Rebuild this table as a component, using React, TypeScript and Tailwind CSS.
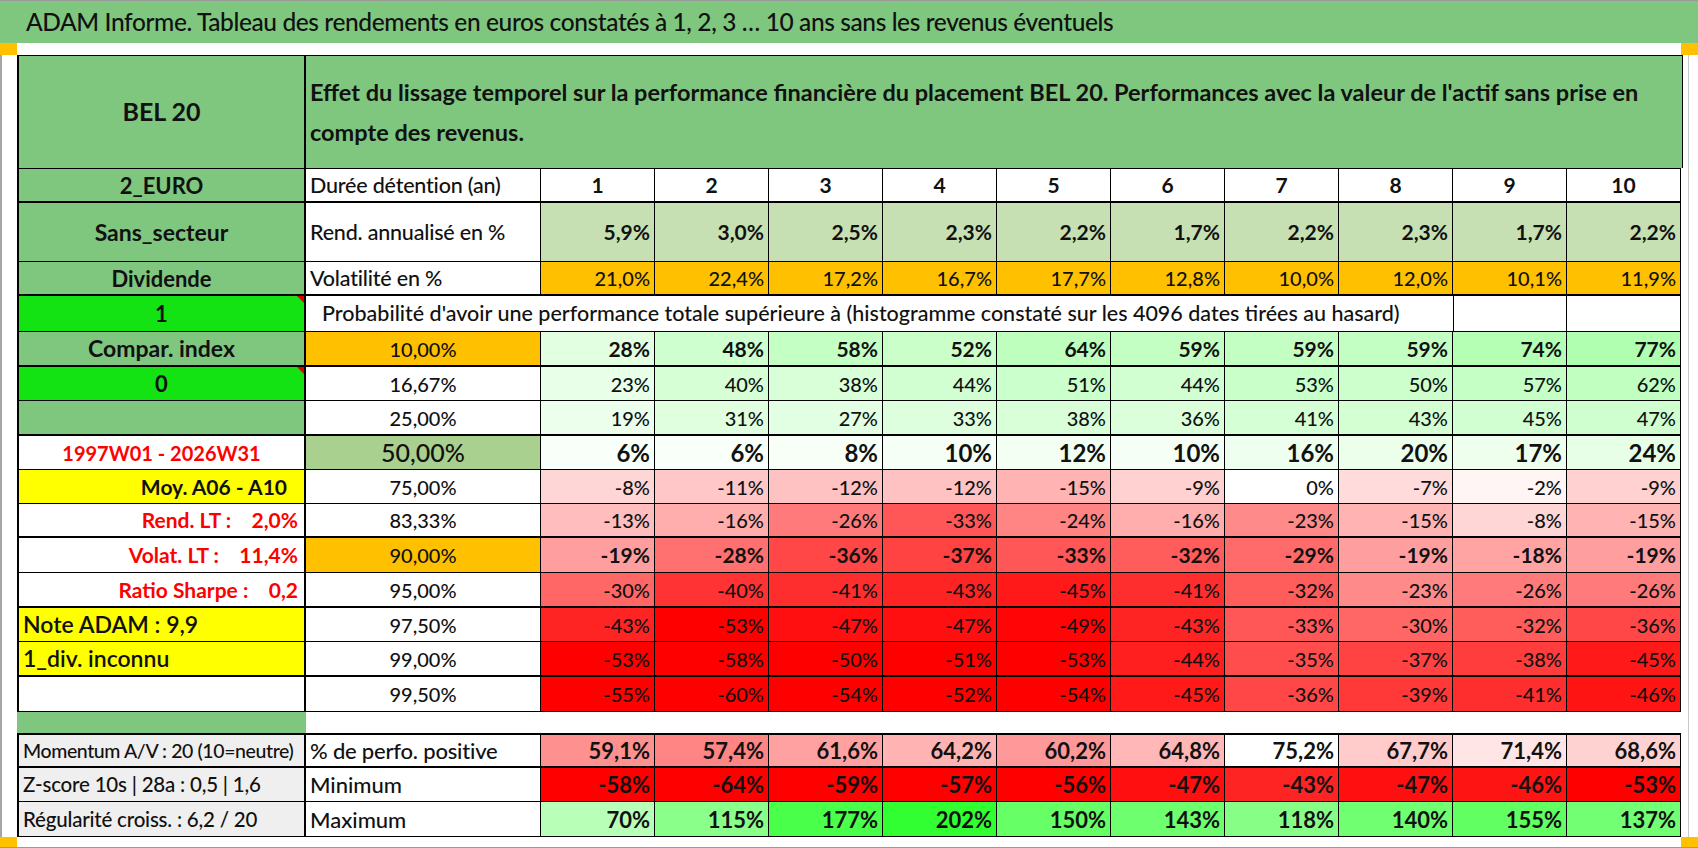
import React from "react";

type Kind = "green" | "red" | "pos" | "plain" | "rend" | "vol";

interface Row {
  h: string;
  c1: string;
  c1Cls: string;
  c2: string;
  c2Cls: string;
  vals: string[];
  kind: Kind;
  valCls: string;
  thick?: boolean;
  flag?: boolean;
}

const num = (s: string) => parseFloat(s.replace(",", ".").replace("%", ""));

// colour scale like the Excel conditional formatting
function heat(s: string, kind: Kind): string | undefined {
  const v = num(s);
  if (kind === "pos") {
    const f = Math.min(1, Math.max(0, (75.2 - v) / 37));
    const c = Math.round(255 * (1 - f));
    return `rgb(255,${c},${c})`;
  }
  if (kind !== "green" && kind !== "red") return undefined;
  if (v >= 0) {
    const f = Math.min(1, v / 250);
    const c = Math.round(255 * (1 - f));
    return `rgb(${c},255,${c})`;
  }
  const f = Math.min(1, -v / 50);
  const c = Math.round(255 * (1 - f));
  return `rgb(255,${c},${c})`;
}

const G = "bg-[#7fc77f]";
const LIME = "bg-[#13e313]";
const YEL = "bg-[#ffff00]";
const GRAY = "bg-[#efefef]";
const LBL = "pl-[4px] text-[21.5px] font-medium tracking-[-0.2px]";
const SIDE = `${GRAY} justify-start pl-[4px] font-medium text-[20.5px] tracking-[-0.2px]`;

const rows: Row[] = [
  { h: "h-[59px]", c1: "Sans_secteur", c1Cls: `${G} justify-center font-bold text-[23px]`, c2: "Rend. annualisé en %", c2Cls: LBL, vals: ["5,9%", "3,0%", "2,5%", "2,3%", "2,2%", "1,7%", "2,2%", "2,3%", "1,7%", "2,2%"], kind: "rend", valCls: "font-bold text-[21px]" },
  { h: "h-[34px]", c1: "Dividende", c1Cls: `${G} justify-center font-bold text-[22px]`, c2: "Volatilité en %", c2Cls: LBL, vals: ["21,0%", "22,4%", "17,2%", "16,7%", "17,7%", "12,8%", "10,0%", "12,0%", "10,1%", "11,9%"], kind: "vol", valCls: "font-medium text-[20px]", thick: true },
];

const probRows: Row[] = [
  { h: "h-[35px]", c1: "Compar. index", c1Cls: `${G} justify-center font-bold text-[23px]`, c2: "10,00%", c2Cls: "bg-[#ffc000] justify-center font-medium text-[20px]", vals: ["28%", "48%", "58%", "52%", "64%", "59%", "59%", "59%", "74%", "77%"], kind: "green", valCls: "font-bold text-[21px]", thick: true },
  { h: "h-[34px]", c1: "0", c1Cls: `${LIME} justify-center font-bold text-[22px]`, c2: "16,67%", c2Cls: "justify-center font-medium text-[20px]", vals: ["23%", "40%", "38%", "44%", "51%", "44%", "53%", "50%", "57%", "62%"], kind: "green", valCls: "font-medium text-[20px]", flag: true },
  { h: "h-[35px]", c1: "", c1Cls: G, c2: "25,00%", c2Cls: "justify-center font-medium text-[20px]", vals: ["19%", "31%", "27%", "33%", "38%", "36%", "41%", "43%", "45%", "47%"], kind: "green", valCls: "font-medium text-[20px]", thick: true },
  { h: "h-[34px]", c1: "1997W01 - 2026W31", c1Cls: "justify-center font-bold text-[20px] text-[#ff0000]", c2: "50,00%", c2Cls: "bg-[#a9d08e] justify-center font-medium text-[25px]", vals: ["6%", "6%", "8%", "10%", "12%", "10%", "16%", "20%", "17%", "24%"], kind: "green", valCls: "font-bold text-[24px]" },
  { h: "h-[34px]", c1: "Moy. A06 - A10", c1Cls: `${YEL} justify-end pr-[17px] font-bold text-[21px]`, c2: "75,00%", c2Cls: "justify-center font-medium text-[20px]", vals: ["-8%", "-11%", "-12%", "-12%", "-15%", "-9%", "0%", "-7%", "-2%", "-9%"], kind: "red", valCls: "font-medium text-[20px]" },
  { h: "h-[34px]", c1: "Rend. LT :    2,0%", c1Cls: "justify-end pr-[6px] font-bold text-[21px] text-[#ff0000]", c2: "83,33%", c2Cls: "justify-center font-medium text-[20px]", vals: ["-13%", "-16%", "-26%", "-33%", "-24%", "-16%", "-23%", "-15%", "-8%", "-15%"], kind: "red", valCls: "font-medium text-[20px]", thick: true },
  { h: "h-[35px]", c1: "Volat. LT :    11,4%", c1Cls: "justify-end pr-[6px] font-bold text-[21px] text-[#ff0000]", c2: "90,00%", c2Cls: "bg-[#ffc000] justify-center font-medium text-[20px]", vals: ["-19%", "-28%", "-36%", "-37%", "-33%", "-32%", "-29%", "-19%", "-18%", "-19%"], kind: "red", valCls: "font-bold text-[21px]" },
  { h: "h-[35px]", c1: "Ratio Sharpe :    0,2", c1Cls: "justify-end pr-[6px] font-bold text-[21px] text-[#ff0000]", c2: "95,00%", c2Cls: "justify-center font-medium text-[20px]", vals: ["-30%", "-40%", "-41%", "-43%", "-45%", "-41%", "-32%", "-23%", "-26%", "-26%"], kind: "red", valCls: "font-medium text-[20px]", thick: true },
  { h: "h-[34px]", c1: "Note ADAM : 9,9", c1Cls: `${YEL} justify-start pl-[4px] font-semibold text-[23px]`, c2: "97,50%", c2Cls: "justify-center font-medium text-[20px]", vals: ["-43%", "-53%", "-47%", "-47%", "-49%", "-43%", "-33%", "-30%", "-32%", "-36%"], kind: "red", valCls: "font-medium text-[20px]" },
  { h: "h-[35px]", c1: "1_div. inconnu", c1Cls: `${YEL} justify-start pl-[4px] font-semibold text-[23px]`, c2: "99,00%", c2Cls: "justify-center font-medium text-[20px]", vals: ["-53%", "-58%", "-50%", "-51%", "-53%", "-44%", "-35%", "-37%", "-38%", "-45%"], kind: "red", valCls: "font-medium text-[20px]", thick: true },
  { h: "h-[35px]", c1: "", c1Cls: "", c2: "99,50%", c2Cls: "justify-center font-medium text-[20px]", vals: ["-55%", "-60%", "-54%", "-52%", "-54%", "-45%", "-36%", "-39%", "-41%", "-46%"], kind: "red", valCls: "font-medium text-[20px]" },
];

const bottomRows: Row[] = [
  { h: "h-[35px]", c1: "Momentum A/V : 20 (10=neutre)", c1Cls: `${GRAY} justify-start pl-[4px] font-medium text-[19.5px] tracking-[-0.4px]`, c2: "% de perfo. positive", c2Cls: "pl-[4px] font-medium text-[22px] tracking-[-0.2px]", vals: ["59,1%", "57,4%", "61,6%", "64,2%", "60,2%", "64,8%", "75,2%", "67,7%", "71,4%", "68,6%"], kind: "pos", valCls: "font-bold text-[22px]", thick: true },
  { h: "h-[34px]", c1: "Z-score 10s | 28a : 0,5 | 1,6", c1Cls: SIDE, c2: "Minimum", c2Cls: "pl-[4px] font-medium text-[22px]", vals: ["-58%", "-64%", "-59%", "-57%", "-56%", "-47%", "-43%", "-47%", "-46%", "-53%"], kind: "red", valCls: "font-bold text-[22px]" },
  { h: "h-[35px]", c1: "Régularité croiss. : 6,2 / 20", c1Cls: SIDE, c2: "Maximum", c2Cls: "pl-[4px] font-medium text-[22px]", vals: ["70%", "115%", "177%", "202%", "150%", "143%", "118%", "140%", "155%", "137%"], kind: "green", valCls: "font-bold text-[22px]" },
];

function Flag() {
  return <span className="absolute top-0 right-0 w-0 h-0 border-t-[7px] border-l-[7px] border-t-[#e00000] border-l-transparent" />;
}

function TableRow({ r, top }: { r: Row; top?: boolean }) {
  const b = r.thick ? "border-b-2" : "border-b";
  const t = top ? "border-t-2" : "";
  return (
    <div className={`flex ${r.h}`}>
      <div className={`relative w-[289px] shrink-0 flex items-center overflow-hidden border-l-2 border-r-2 ${b} ${t} border-black whitespace-pre ${r.c1Cls}`}>
        {r.c1}
        {r.flag && <Flag />}
      </div>
      <div className={`w-[235px] shrink-0 flex items-center border-r ${b} ${t} border-black whitespace-nowrap ${r.c2Cls}`}>{r.c2}</div>
      {r.vals.map((v, i) => (
        <div
          key={i}
          className={`w-[114px] shrink-0 flex items-center justify-end pr-[4px] border-r ${b} ${t} border-black ${r.valCls} ${r.kind === "rend" ? "bg-[#c6e0b4]" : ""} ${r.kind === "vol" ? "bg-[#ffc000]" : ""}`}
          style={{ backgroundColor: heat(v, r.kind) }}
        >
          {v}
        </div>
      ))}
    </div>
  );
}

export default function App() {
  return (
    <div className="w-[1698px] h-[848px] bg-white flex flex-col text-[#111] font-['Lato','Liberation_Sans',sans-serif] overflow-hidden">
      {/* title bar */}
      <div className="h-[43px] shrink-0 bg-[#7fc77f] border-t border-[#9a9a9a] pl-[26px] flex items-center text-[24.5px] tracking-[-0.4px] font-medium whitespace-nowrap">
        ADAM Informe. Tableau des rendements en euros constatés à 1, 2, 3 … 10 ans sans les revenus éventuels
      </div>
      <div className="h-[12px] shrink-0 flex justify-between">
        <div className="w-[17px] bg-[#ffc000]" />
        <div className="w-[17px] bg-[#ffc000]" />
      </div>

      <div className="flex shrink-0 border-l-2 border-[#a6a6a6]">
        <div className="w-[15px] shrink-0" />
        <div className="w-[1666px] shrink-0">
          {/* header */}
          <div className="flex h-[113px]">
            <div className={`w-[289px] shrink-0 ${G} border-l-2 border-t border-r-2 border-black flex items-center justify-center font-bold text-[25px]`}>BEL 20</div>
            <div className={`flex-1 ${G} border-t border-r border-black flex items-center pl-[4px] font-bold text-[23.5px] leading-[40px] whitespace-nowrap`}>
              <div>
                Effet du lissage temporel sur la performance financière du placement BEL 20. Performances avec la valeur de l'actif sans prise en
                <br />
                compte des revenus.
              </div>
            </div>
          </div>
          {/* durations */}
          <div className="flex h-[35px]">
            <div className={`w-[289px] shrink-0 ${G} border-l-2 border-r-2 border-b-2 border-t border-black flex items-center justify-center font-bold text-[22px]`}>2_EURO</div>
            <div className={`w-[235px] shrink-0 border-r border-b-2 border-t border-black flex items-center whitespace-nowrap ${LBL}`}>Durée détention (an)</div>
            {[1, 2, 3, 4, 5, 6, 7, 8, 9, 10].map((n) => (
              <div key={n} className="w-[114px] shrink-0 border-r border-b-2 border-t border-black flex items-center justify-center font-bold text-[21px]">
                {n}
              </div>
            ))}
          </div>
          {rows.map((r, i) => (
            <TableRow key={i} r={r} />
          ))}
          {/* probability caption */}
          <div className="flex h-[36px]">
            <div className={`relative w-[289px] shrink-0 ${LIME} border-l-2 border-r-2 border-b border-black flex items-center justify-center font-bold text-[22px]`}>
              1
              <Flag />
            </div>
            <div className="w-[1147px] shrink-0 border-b border-black flex items-center pl-[16px] font-medium text-[21.5px] whitespace-nowrap">
              Probabilité d'avoir une performance totale supérieure à (histogramme constaté sur les 4096 dates tirées au hasard)
            </div>
            <div className="w-[114px] shrink-0 border-l border-r border-b border-black" />
            <div className="w-[114px] shrink-0 border-r border-b border-black" />
          </div>
          {probRows.map((r, i) => (
            <TableRow key={i} r={r} />
          ))}
          {/* spacer */}
          <div className="flex h-[21px]">
            <div className={`w-[289px] shrink-0 ${G}`} />
          </div>
          {bottomRows.map((r, i) => (
            <TableRow key={i} r={r} top={i === 0} />
          ))}
        </div>
        <div className="w-[6px] shrink-0 border-r border-[#c8c8c8]" />
      </div>

      <div className="flex-1 flex justify-between border-b border-[#9a9a9a]">
        <div className="w-[17px] bg-[#ffc000]" />
        <div className="w-[17px] bg-[#ffc000]" />
      </div>
    </div>
  );
}
